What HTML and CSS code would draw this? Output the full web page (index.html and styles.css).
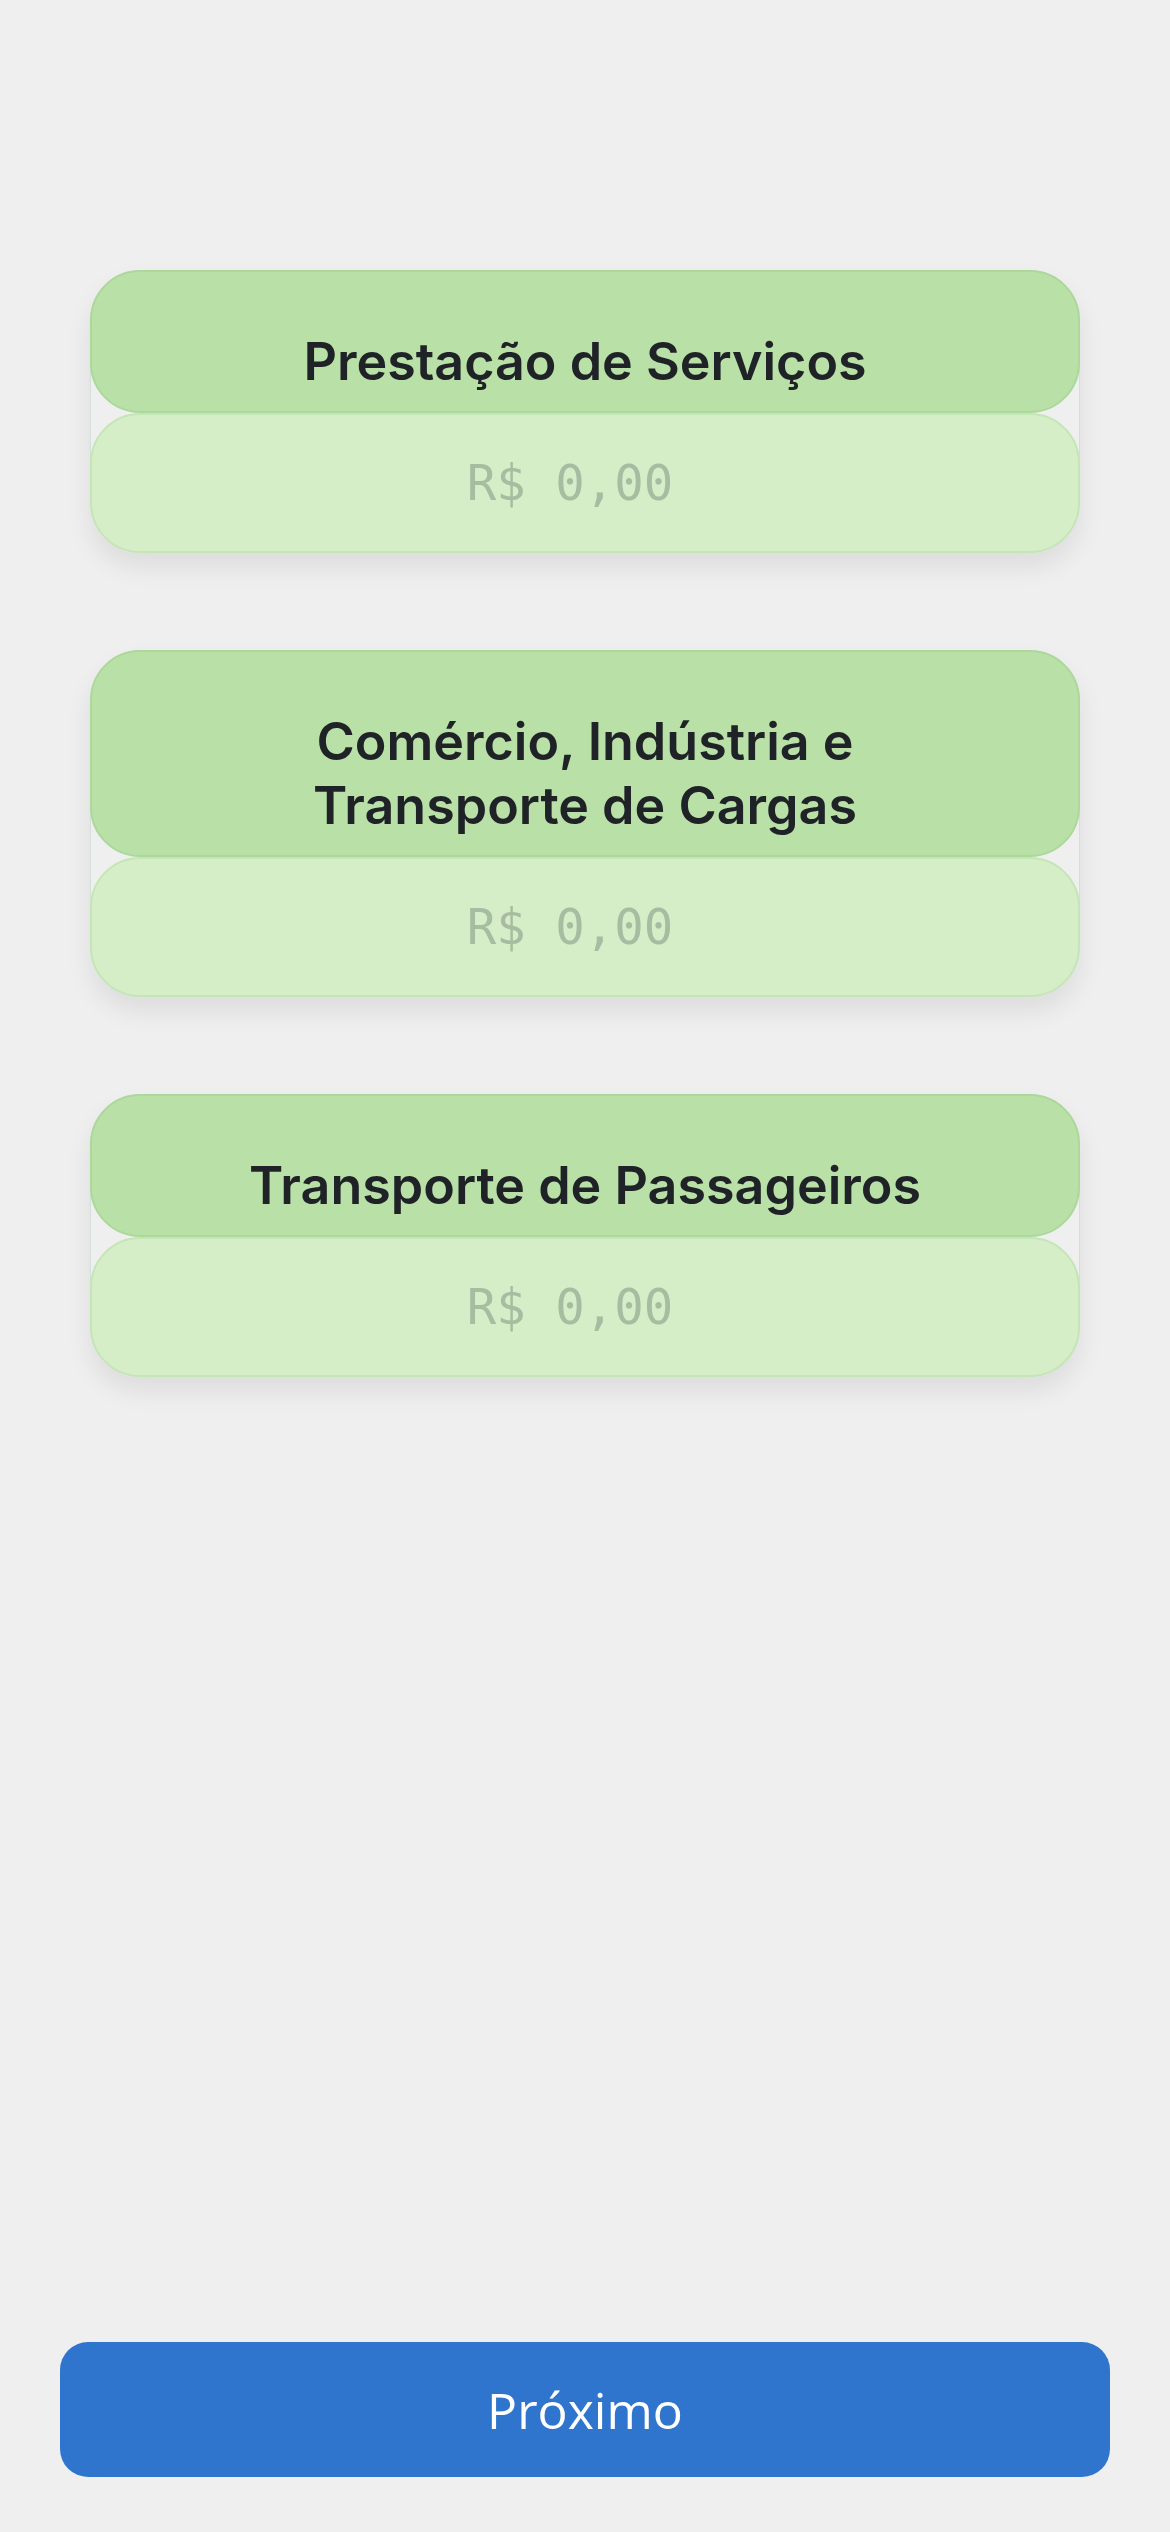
FILE: index.html
```html
<!DOCTYPE html>
<html lang="pt-BR">
<head>
<meta charset="utf-8">
<title>Receitas</title>
<link rel="stylesheet" href="styles.css">
</head>
<body>
<main class="page">
  <section class="cards">
    <div class="card">
      <div class="card-title">Prestação de Serviços</div>
      <div class="card-input">R$ 0,00</div>
    </div>
    <div class="card">
      <div class="card-title">Comércio, Indústria e<br>Transporte de Cargas</div>
      <div class="card-input">R$ 0,00</div>
    </div>
    <div class="card">
      <div class="card-title">Transporte de Passageiros</div>
      <div class="card-input">R$ 0,00</div>
    </div>
  </section>
  <div class="spacer"></div>
  <button class="next">Próximo</button>
</main>
</body>
</html>
```
FILE: styles.css
```css
* { box-sizing: border-box; }
html, body {
  margin: 0;
  padding: 0;
  background: #efefef;
}
.page {
  display: flex;
  flex-direction: column;
  height: 2532px;
  padding-top: 270px;
}
.cards {
  display: flex;
  flex-direction: column;
  gap: 97px;
  padding-left: 90px;
}
.card {
  width: 990px;
  border: 1px solid #d3e0da;
  border-radius: 50px;
  box-shadow: 0 14px 26px rgba(0, 0, 0, 0.08);
  display: flex;
  flex-direction: column;
}
.card-title {
  margin: -1px -1px 0 -1px;
  background: #b9e1a7;
  border: 2px solid #acd89c;
  border-radius: 50px;
  padding: 58px 20px 17px;
  text-align: center;
  font-family: "Inter", "Roboto", sans-serif;
  font-weight: 600;
  font-size: 52px;
  line-height: 64px;
  color: #1f2226;
}
.card-input {
  margin: 0 -1px -1px -1px;
  height: 140px;
  background: #d5eec8;
  border: 2px solid #c4e6b6;
  border-radius: 50px;
  display: flex;
  align-items: center;
  justify-content: center;
  padding-right: 30px;
  font-family: "DejaVu Sans Mono", "Liberation Mono", monospace;
  font-size: 49px;
  color: #a7bca0;
}
.spacer { flex: 1; }
.next {
  margin: 0 0 55px 60px;
  width: 1050px;
  height: 135px;
  border: none;
  border-radius: 28px;
  background: #2f75cd;
  color: #ffffff;
  font-family: "Open Sans", "Noto Sans", sans-serif;
  font-size: 50px;
  font-weight: 400;
}
```
